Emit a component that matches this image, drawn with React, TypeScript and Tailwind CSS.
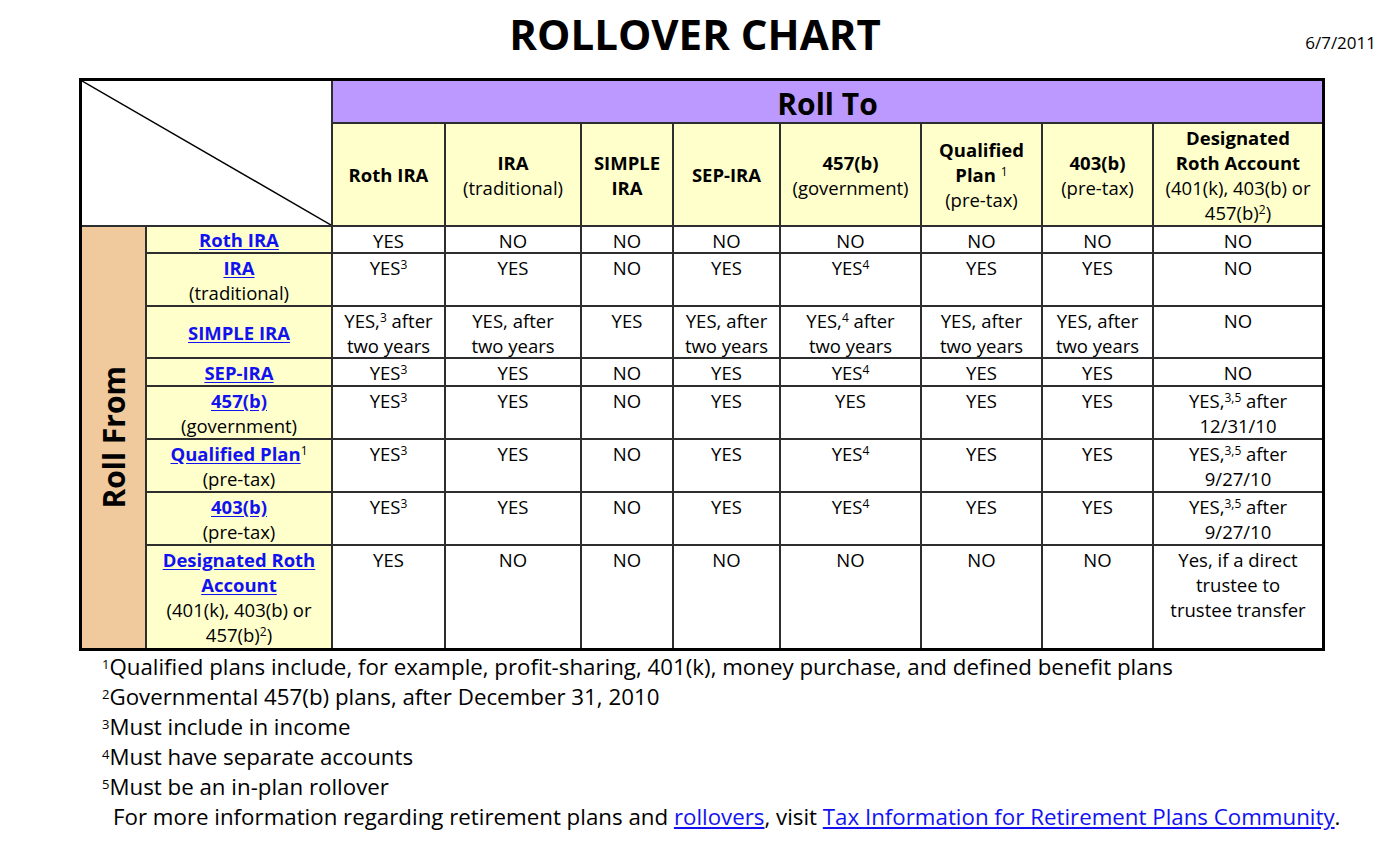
import type { ReactNode } from 'react'

function Sup({ children }: { children: ReactNode }) {
  return <sup className="text-[12px]">{children}</sup>
}

function Link({ children }: { children: ReactNode }) {
  return <span className="font-bold text-[#1212f0] underline underline-offset-2">{children}</span>
}

const headers: ReactNode[] = [
  <b>Roth IRA</b>,
  <>
    <b>IRA</b>
    <br />
    (traditional)
  </>,
  <b>
    SIMPLE
    <br />
    IRA
  </b>,
  <b>SEP-IRA</b>,
  <>
    <b>457(b)</b>
    <br />
    (government)
  </>,
  <>
    <b>Qualified</b>
    <br />
    <b>Plan</b> <Sup>1</Sup>
    <br />
    (pre-tax)
  </>,
  <>
    <b>403(b)</b>
    <br />
    (pre-tax)
  </>,
  <>
    <b>Designated</b>
    <br />
    <b>Roth Account</b>
    <br />
    (401(k), 403(b) or
    <br />
    457(b)<Sup>2</Sup>)
  </>,
]

const afterTwo = (mark?: string) => (
  <>
    YES,{mark && <Sup>{mark}</Sup>} after
    <br />
    two years
  </>
)

const y3 = (
  <>
    YES<Sup>3</Sup>
  </>
)
const y4 = (
  <>
    YES<Sup>4</Sup>
  </>
)
const after35 = (date: string) => (
  <>
    YES,<Sup>3,5</Sup> after
    <br />
    {date}
  </>
)

const rows: { label: ReactNode; cells: ReactNode[] }[] = [
  { label: <Link>Roth IRA</Link>, cells: ['YES', 'NO', 'NO', 'NO', 'NO', 'NO', 'NO', 'NO'] },
  {
    label: (
      <>
        <Link>IRA</Link>
        <br />
        (traditional)
      </>
    ),
    cells: [y3, 'YES', 'NO', 'YES', y4, 'YES', 'YES', 'NO'],
  },
  {
    label: <Link>SIMPLE IRA</Link>,
    cells: [afterTwo('3'), afterTwo(), 'YES', afterTwo(), afterTwo('4'), afterTwo(), afterTwo(), 'NO'],
  },
  { label: <Link>SEP-IRA</Link>, cells: [y3, 'YES', 'NO', 'YES', y4, 'YES', 'YES', 'NO'] },
  {
    label: (
      <>
        <Link>457(b)</Link>
        <br />
        (government)
      </>
    ),
    cells: [y3, 'YES', 'NO', 'YES', 'YES', 'YES', 'YES', after35('12/31/10')],
  },
  {
    label: (
      <>
        <Link>Qualified Plan</Link>
        <Sup>1</Sup>
        <br />
        (pre-tax)
      </>
    ),
    cells: [y3, 'YES', 'NO', 'YES', y4, 'YES', 'YES', after35('9/27/10')],
  },
  {
    label: (
      <>
        <Link>403(b)</Link>
        <br />
        (pre-tax)
      </>
    ),
    cells: [y3, 'YES', 'NO', 'YES', y4, 'YES', 'YES', after35('9/27/10')],
  },
  {
    label: (
      <>
        <Link>Designated Roth</Link>
        <br />
        <Link>Account</Link>
        <br />
        (401(k), 403(b) or
        <br />
        457(b)<Sup>2</Sup>)
      </>
    ),
    cells: [
      'YES',
      'NO',
      'NO',
      'NO',
      'NO',
      'NO',
      'NO',
      <>
        Yes, if a direct
        <br />
        trustee to
        <br />
        trustee transfer
      </>,
    ],
  },
]

const footnotes: [string, string][] = [
  ['1', 'Qualified plans include, for example, profit-sharing, 401(k), money purchase, and defined benefit plans'],
  ['2', 'Governmental 457(b) plans, after December 31, 2010'],
  ['3', 'Must include in income'],
  ['4', 'Must have separate accounts'],
  ['5', 'Must be an in-plan rollover'],
]

export default function App() {
  return (
    <div className="w-[1390px] min-h-[845px] bg-white text-black font-['Open_Sans',sans-serif]">
      <div className="grid grid-cols-[1fr_auto_1fr] h-[78px]">
        <div />
        <h1 className="self-center text-[42px] font-bold leading-none pb-[10px]">ROLLOVER CHART</h1>
        <div className="justify-self-end self-center pr-[14px] pt-[8px] text-[17px]">6/7/2011</div>
      </div>

      <div className="ml-[79px] w-[1246px] border-[3px] border-black bg-[#2e2e2e] grid gap-[2px] grid-cols-[63px_184px_111px_134px_90px_105px_139px_119px_109px_168px] grid-rows-[41px_101px_25px_51px_50px_26px_51px_51px_51px_102px] text-[18.5px] leading-[25px]">
        <div className="col-span-2 row-span-2 bg-white relative">
          <svg className="absolute inset-0 w-full h-full" viewBox="0 0 100 100" preserveAspectRatio="none">
            <line x1="0" y1="0" x2="100" y2="100" stroke="#000" strokeWidth="1.5" vectorEffect="non-scaling-stroke" />
          </svg>
        </div>
        <div className="col-span-8 bg-[#bb99ff] flex items-center justify-center pt-[4px] text-[30px] font-bold">
          Roll To
        </div>
        {headers.map((h, i) => (
          <div key={i} className="bg-[#ffffcc] flex items-center justify-center text-center px-1">
            <div>{h}</div>
          </div>
        ))}
        <div className="row-span-8 bg-[#f0c99c] flex items-center justify-center">
          <span className="[writing-mode:vertical-rl] rotate-180 text-[30px] font-bold leading-none">Roll From</span>
        </div>
        {rows.map((r, ri) => (
          <>
            <div key={`l${ri}`} className="bg-[#ffffcc] flex items-center justify-center text-center">
              <div>{r.label}</div>
            </div>
            {r.cells.map((c, ci) => (
              <div key={`c${ri}-${ci}`} className="bg-white text-center pt-[1px] px-1 whitespace-nowrap">
                {c}
              </div>
            ))}
          </>
        ))}
      </div>

      <div className="pl-[102px] text-[22.3px] leading-[30px] pt-[1px]">
        {footnotes.map(([n, t]) => (
          <div key={n}>
            <sup className="text-[13px]">{n}</sup>
            {t}
          </div>
        ))}
        <div className="pl-[11px]">
          For more information regarding retirement plans and{' '}
          <span className="text-[#1212f0] underline underline-offset-2">rollovers</span>, visit{' '}
          <span className="text-[#1212f0] underline underline-offset-2">Tax Information for Retirement Plans Community</span>.
        </div>
      </div>
    </div>
  )
}
